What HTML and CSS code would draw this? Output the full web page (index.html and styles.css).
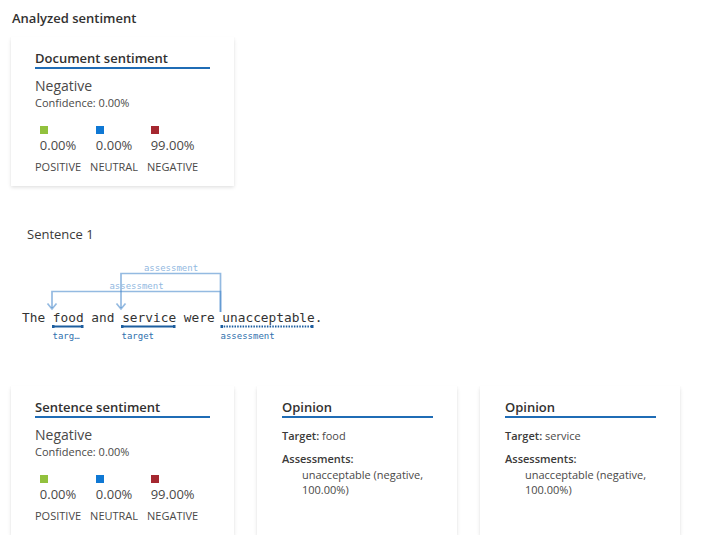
FILE: index.html
```html
<!DOCTYPE html>
<html lang="en">
<head>
<meta charset="utf-8">
<title>Analyzed sentiment</title>
<link rel="stylesheet" href="styles.css">
</head>
<body>
<div class="page">
  <h2 class="title">Analyzed sentiment</h2>

  <div class="card sentiment-card">
    <h3 class="card-heading">Document sentiment</h3>
    <div class="label-main">Negative</div>
    <div class="confidence">Confidence: 0.00%</div>
    <div class="scores">
      <div class="score">
        <div class="score-top"><span class="swatch pos"></span><span class="pct">0.00%</span></div>
        <div class="score-label">POSITIVE</div>
      </div>
      <div class="score">
        <div class="score-top"><span class="swatch neu"></span><span class="pct">0.00%</span></div>
        <div class="score-label">NEUTRAL</div>
      </div>
      <div class="score">
        <div class="score-top"><span class="swatch neg"></span><span class="pct">99.00%</span></div>
        <div class="score-label">NEGATIVE</div>
      </div>
    </div>
  </div>

  <section class="sentence">
    <div class="sentence-label">Sentence 1</div>
    <svg class="diagram" width="340" height="95" viewBox="0 250 340 95" xmlns="http://www.w3.org/2000/svg">
      <g class="arc" fill="none">
        <path d="M121 308 V273.5 H220.5 V312"/>
        <path d="M52 308 V291.5 H220.5 V312"/>
        <path d="M47.5 303.5 L52 309 L56.5 303.5"/>
        <path d="M116.5 303.5 L121 309 L125.5 303.5"/>
      </g>
      <text class="arc-label" x="171" y="271" text-anchor="middle">assessment</text>
      <text class="arc-label" x="136.5" y="289" text-anchor="middle">assessment</text>
      <text class="sent-text" x="22" y="321.5">The food and service were unacceptable.</text>
      <g class="uline">
        <line x1="53" y1="326.5" x2="83" y2="326.5"/>
        <line x1="122" y1="326.5" x2="175" y2="326.5"/>
        <line class="dotted" x1="221" y1="326.5" x2="313" y2="326.5"/>
      </g>
      <g class="ucap">
        <rect x="52" y="325" width="2.5" height="3"/>
        <rect x="81" y="325" width="2.5" height="3"/>
        <rect x="121" y="325" width="2.5" height="3"/>
        <rect x="173" y="325" width="2.5" height="3"/>
        <rect x="220.5" y="325" width="2.5" height="3"/>
        <rect x="311" y="325" width="2.5" height="3"/>
      </g>
      <text class="tag-label" x="52.5" y="338.5">targ…</text>
      <text class="tag-label" x="121.5" y="338.5">target</text>
      <text class="tag-label" x="220.5" y="338.5">assessment</text>
    </svg>

    <div class="cards-row">
      <div class="card sentiment-card">
        <h3 class="card-heading">Sentence sentiment</h3>
        <div class="label-main">Negative</div>
        <div class="confidence">Confidence: 0.00%</div>
        <div class="scores">
          <div class="score">
            <div class="score-top"><span class="swatch pos"></span><span class="pct">0.00%</span></div>
            <div class="score-label">POSITIVE</div>
          </div>
          <div class="score">
            <div class="score-top"><span class="swatch neu"></span><span class="pct">0.00%</span></div>
            <div class="score-label">NEUTRAL</div>
          </div>
          <div class="score">
            <div class="score-top"><span class="swatch neg"></span><span class="pct">99.00%</span></div>
            <div class="score-label">NEGATIVE</div>
          </div>
        </div>
      </div>

      <div class="card opinion-card">
        <h3 class="card-heading">Opinion</h3>
        <div class="op-line"><b>Target:</b> food</div>
        <div class="op-line op-assess"><b>Assessments:</b></div>
        <ul class="op-list"><li>unacceptable (negative, 100.00%)</li></ul>
      </div>

      <div class="card opinion-card">
        <h3 class="card-heading">Opinion</h3>
        <div class="op-line"><b>Target:</b> service</div>
        <div class="op-line op-assess"><b>Assessments:</b></div>
        <ul class="op-list"><li>unacceptable (negative, 100.00%)</li></ul>
      </div>
    </div>
  </section>
</div>
</body>
</html>
```

FILE: styles.css
```css
* { box-sizing: border-box; }

body {
  margin: 0;
  background: #ffffff;
  font-family: "Open Sans", "Noto Sans", sans-serif;
  color: #323130;
}

.page {
  padding: 8px 11px 0 11px;
}

.title {
  margin: 0 0 0 1px;
  font-size: 13px;
  line-height: 20px;
  font-weight: 600;
  color: #323130;
}

.card {
  background: #ffffff;
  box-shadow: 0 1.6px 3.6px rgba(0, 0, 0, 0.13), 0 0.3px 0.9px rgba(0, 0, 0, 0.11);
  padding: 13px 24px 12px 24px;
}

.sentiment-card {
  width: 223px;
  margin-top: 9px;
}

.card-heading {
  margin: 0;
  font-size: 13px;
  line-height: 17px;
  font-weight: 600;
  color: #323130;
  border-bottom: 2px solid #1f6cb5;
}

.label-main {
  margin-top: 7px;
  font-size: 14px;
  line-height: 20px;
  color: #4a4948;
}

.confidence {
  font-size: 11px;
  line-height: 14px;
  color: #4a4948;
}

.scores {
  display: flex;
  gap: 9px;
  margin-top: 16px;
}

.score {
  display: flex;
  flex-direction: column;
  align-items: center;
}

.score-top {
  display: flex;
  flex-direction: column;
  align-items: flex-start;
}

.swatch {
  width: 8px;
  height: 8px;
  margin-bottom: 2px;
}
.swatch.pos { background: #92c13d; }
.swatch.neu { background: #0f78d4; }
.swatch.neg { background: #a52730; }

.pct {
  font-size: 13px;
  line-height: 18px;
  color: #4a4948;
}

.score-label {
  margin-top: 6px;
  font-size: 11px;
  line-height: 14px;
  color: #4a4948;
}

.sentence {
  margin-top: 39px;
}

.sentence-label {
  margin-left: 16px;
  font-size: 13px;
  line-height: 18px;
  color: #3b3a39;
}

.diagram {
  display: block;
  margin: 7px 0 0 -11px;
}

.arc path {
  stroke: rgba(60, 130, 200, 0.55);
  stroke-width: 1.7;
}

.arc-label {
  font-family: "DejaVu Sans Mono", monospace;
  font-size: 9px;
  fill: #93b9df;
}

.sent-text {
  font-family: "DejaVu Sans Mono", monospace;
  font-size: 12.8px;
  fill: #333333;
}

.uline line {
  stroke: #1d5e9f;
  stroke-width: 2;
}
.uline line.dotted {
  stroke-dasharray: 1.5 1.2;
}
.ucap rect { fill: #1d5e9f; }

.tag-label {
  font-family: "DejaVu Sans Mono", monospace;
  font-size: 9px;
  fill: #2f70ad;
}

.cards-row {
  display: flex;
  gap: 23px;
  margin-top: 41px;
  align-items: stretch;
}

.cards-row .sentiment-card {
  margin-top: 0;
}

.opinion-card {
  width: 200px;
  height: 149px;
  padding: 13px 24px 12px 25px;
}

.op-line {
  margin-top: 11px;
  font-size: 11px;
  line-height: 14px;
  color: #4a4948;
}
.op-line b {
  font-weight: 600;
  color: #3b3a39;
}
.op-assess {
  margin-top: 9px;
}

.op-list {
  list-style: none;
  margin: 1px 0 0 0;
  padding: 0 0 0 20px;
  font-size: 11px;
  line-height: 15px;
  color: #4a4948;
}
```
